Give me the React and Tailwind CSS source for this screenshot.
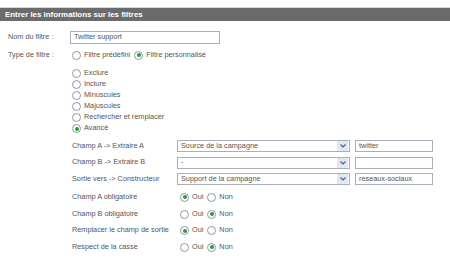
import React from 'react';

function Radio({ checked, label, className = '' }) {
  return (
    <span className={`inline-flex items-center ${className}`}>
      <span className="w-[9px] h-[9px] rounded-full border border-[#8c99a6] bg-white flex items-center justify-center shrink-0">
        {checked && <span className="w-[4px] h-[4px] rounded-full bg-[#2f9a2f]" />}
      </span>
      <span className="ml-[3px]">{label}</span>
    </span>
  );
}

function Select({ value }) {
  return (
    <div className="w-[173px] h-[12px] border border-[#a7b0ba] bg-white flex items-center">
      <span className="flex-1 pl-[3px] truncate">{value}</span>
      <span className="w-[11px] h-[10px] mr-[1px] bg-[#e2e8f1] flex items-center justify-center">
        <svg width="6" height="4" viewBox="0 0 6 4">
          <path d="M0.5 0.5 L3 3 L5.5 0.5" fill="none" stroke="#4a5f8a" strokeWidth="1.2" />
        </svg>
      </span>
    </div>
  );
}

function TextBox({ value, className = '' }) {
  return (
    <div className={`h-[12px] border border-[#a7b0ba] bg-white flex items-center pl-[3px] ${className}`}>
      {value}
    </div>
  );
}

export default function App() {
  const types = [
    ['Exclure', false],
    ['Inclure', false],
    ['Minuscules', false],
    ['Majuscules', false],
    ['Rechercher et remplacer', false],
    ['Avancé', true],
  ];

  const champs = [
    ['Champ A -> Extraire A', 'Source de la campagne', 'twitter'],
    ['Champ B -> Extraire B', '-', ''],
    ['Sortie vers -> Constructeur', 'Support de la campagne', 'reseaux-sociaux'],
  ];

  const options = [
    ['Champ A obligatoire', true],
    ['Champ B obligatoire', false],
    ['Remplacer le champ de sortie', true],
    ['Respect de la casse', false],
  ];

  return (
    <div className="w-[450px] h-[262px] bg-white font-['Liberation_Sans',Arial,sans-serif] text-[7.3px] text-[#555] overflow-hidden">
      {/* Header */}
      <div className="pt-[7px]">
        <div className="h-[14px] border-t border-[#d8d8d8] bg-[#6b6b6b] text-white font-bold text-[7.9px] leading-[13px] pl-[5px]">
          Entrer les informations sur les filtres
        </div>
      </div>

      <div className="pl-[8px] pt-[10px]">
        <div className="flex items-center h-[13px]">
          <span className="w-[62px]">Nom du filtre :</span>
          <TextBox value="Twitter support" className="w-[150px] h-[13px]" />
        </div>

        <div className="flex items-center h-[12px] mt-[5px]">
          <span className="w-[64px]">Type de filtre :</span>
          <Radio label="Filtre prédéfini" />
          <Radio label="Filtre personnalisé" checked className="ml-[4px]" />
        </div>

        <div className="ml-[64px] mt-[7px] flex flex-col">
          {types.map(([label, checked]) => (
            <div key={label} className="h-[11px] flex items-center">
              <Radio label={label} checked={checked} />
            </div>
          ))}
        </div>

        <div className="ml-[64px] mt-[4px] flex flex-col">
          {champs.map(([label, sel, val]) => (
            <div key={label} className="h-[16.5px] flex items-center">
              <span className="w-[105px]">{label}</span>
              <Select value={sel} />
              <TextBox value={val} className="w-[78px] ml-[5px]" />
            </div>
          ))}
        </div>

        <div className="ml-[64px] mt-[1.5px] flex flex-col">
          {options.map(([label, oui]) => (
            <div key={label} className="h-[16.7px] flex items-center">
              <span className="w-[108px]">{label}</span>
              <Radio label="Oui" checked={oui} />
              <Radio label="Non" checked={!oui} className="ml-[4px]" />
            </div>
          ))}
        </div>
      </div>
    </div>
  );
}
